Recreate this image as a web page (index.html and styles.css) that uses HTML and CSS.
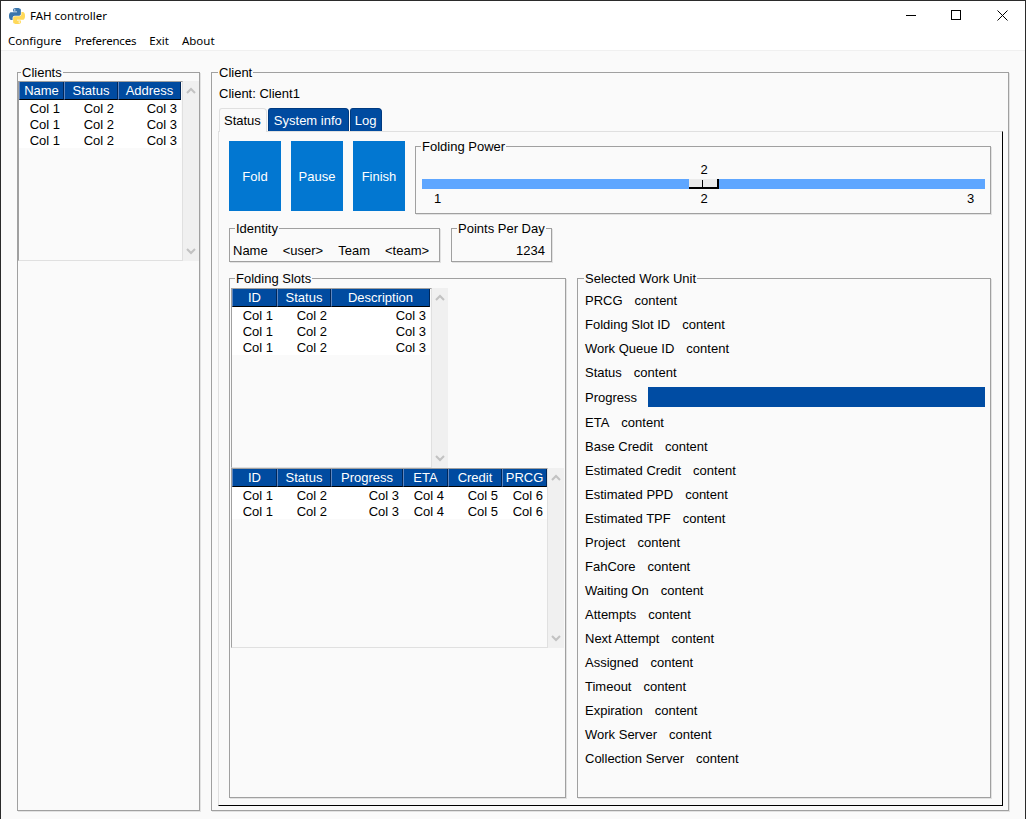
FILE: index.html
```html
<!DOCTYPE html>
<html lang="en">
<head>
<meta charset="utf-8">
<title>FAH controller</title>
<link rel="stylesheet" href="styles.css">
</head>
<body>
<div class="window">
  <header class="titlebar">
    <svg class="app-icon" viewBox="0 0 24 24" width="16" height="16">
      <path fill="#3a75ab" fill-rule="evenodd" d="M14.25.18l.9.2.73.26.59.3.45.32.34.34.25.34.16.33.1.3.04.26.02.2-.01.13V8.5l-.05.63-.13.55-.21.46-.26.38-.3.31-.33.25-.35.19-.35.14-.33.1-.3.07-.26.04-.21.02H8.77l-.69.05-.59.14-.5.22-.41.27-.33.32-.27.35-.2.36-.15.37-.1.35-.07.32-.04.27-.02.21v3.06H3.17l-.21-.03-.28-.07-.32-.12-.35-.18-.36-.26-.36-.36-.35-.46-.32-.59-.28-.73-.21-.88-.14-1.05-.05-1.23.06-1.22.16-1.04.24-.87.32-.71.36-.57.4-.44.42-.33.42-.24.4-.16.36-.1.32-.05.24-.01h.16l.06.01h8.16v-.83H6.18l-.01-2.75-.02-.37.05-.34.11-.31.17-.28.25-.26.31-.23.38-.2.44-.18.51-.15.58-.12.64-.1.71-.06.77-.04.84-.02 1.27.05zm-6.3 1.98l-.23.33-.08.41.08.41.23.34.33.22.41.09.41-.09.33-.22.23-.34.08-.41-.08-.41-.23-.33-.33-.22-.41-.09-.41.09z"/>
      <path fill="#ffd95a" fill-rule="evenodd" d="M21.04 6.11l.28.06.32.12.35.18.36.27.36.35.35.47.32.59.28.73.21.88.14 1.04.05 1.23-.06 1.23-.16 1.04-.24.86-.32.71-.36.57-.4.45-.42.33-.42.24-.4.16-.36.09-.32.05-.24.02-.16-.01h-8.22v.82h5.84l.01 2.76.02.36-.05.34-.11.31-.17.29-.25.25-.31.24-.38.2-.44.17-.51.15-.58.13-.64.09-.71.07-.77.04-.84.01-1.27-.04-1.07-.14-.9-.2-.73-.25-.59-.3-.45-.33-.34-.34-.25-.34-.16-.33-.1-.3-.04-.25-.02-.2.01-.13v-5.34l.05-.64.13-.54.21-.46.26-.38.3-.32.33-.24.35-.2.35-.14.33-.1.3-.06.26-.04.21-.02.13-.01h5.84l.69-.05.59-.14.5-.21.41-.28.33-.32.27-.35.2-.36.15-.36.1-.35.07-.32.04-.28.02-.21V6.07h2.09l.14.01zm-6.47 14.25l-.23.33-.08.41.08.41.23.33.33.23.41.08.41-.08.33-.23.23-.33.08-.41-.08-.41-.23-.33-.33-.23-.41-.08-.41.08z"/>
    </svg>
    <span class="title-text">FAH controller</span>
    <div class="controls">
      <span class="control"><svg width="10" height="10" viewBox="0 0 10 10"><path d="M0 5.5h10" stroke="#000" fill="none"/></svg></span>
      <span class="control"><svg width="10" height="10" viewBox="0 0 10 10"><rect x=".5" y=".5" width="9" height="9" stroke="#000" fill="none"/></svg></span>
      <span class="control control-close"><svg width="11" height="11" viewBox="0 0 11 11"><path d="M.5.5l10 10M10.5.5l-10 10" stroke="#000" fill="none"/></svg></span>
    </div>
  </header>
  <nav class="menu">
    <span>Configure</span><span>Preferences</span><span>Exit</span><span>About</span>
  </nav>
  <main class="main">
    <fieldset class="group clients">
      <legend>Clients</legend>
      <div class="list-wrap">
        <div class="list list-clients">
          <table class="grid">
            <colgroup><col class="w45"><col class="w54"><col class="w63"></colgroup>
            <thead><tr><th>Name</th><th>Status</th><th>Address</th></tr></thead>
            <tbody>
              <tr><td>Col 1</td><td>Col 2</td><td>Col 3</td></tr>
              <tr><td>Col 1</td><td>Col 2</td><td>Col 3</td></tr>
              <tr><td>Col 1</td><td>Col 2</td><td>Col 3</td></tr>
            </tbody>
          </table>
        </div>
        <div class="scrollbar">
          <svg width="10" height="7" viewBox="0 0 10 7"><path d="M1 6l4-4 4 4" class="chev"/></svg>
          <svg width="10" height="7" viewBox="0 0 10 7"><path d="M1 1l4 4 4-4" class="chev"/></svg>
        </div>
      </div>
    </fieldset>
    <fieldset class="group client">
      <legend>Client</legend>
      <div class="client-name">Client: Client1</div>
      <div class="tabs">
        <span class="tab tab-active">Status</span>
        <span class="tab tab-wide">System info</span>
        <span class="tab">Log</span>
      </div>
      <section class="pane">
        <div class="top-row">
          <button class="action">Fold</button>
          <button class="action">Pause</button>
          <button class="action">Finish</button>
          <fieldset class="group power">
            <legend>Folding Power</legend>
            <div class="slider-value">2</div>
            <div class="track"><div class="thumb"><i class="tick"></i></div></div>
            <div class="scale"><span>1</span><span>2</span><span>3</span></div>
          </fieldset>
        </div>
        <div class="info-row">
          <fieldset class="group identity">
            <legend>Identity</legend>
            <div class="identity-row"><span>Name</span><span>&lt;user&gt;</span><span>Team</span><span>&lt;team&gt;</span></div>
          </fieldset>
          <fieldset class="group ppd">
            <legend>Points Per Day</legend>
            <div class="ppd-value">1234</div>
          </fieldset>
        </div>
        <div class="bottom-row">
          <fieldset class="group slots">
            <legend>Folding Slots</legend>
            <div class="list-wrap">
              <div class="list list-slots">
                <table class="grid">
                  <colgroup><col class="w45"><col class="w54"><col class="w99"></colgroup>
                  <thead><tr><th>ID</th><th>Status</th><th>Description</th></tr></thead>
                  <tbody>
                    <tr><td>Col 1</td><td>Col 2</td><td>Col 3</td></tr>
                    <tr><td>Col 1</td><td>Col 2</td><td>Col 3</td></tr>
                    <tr><td>Col 1</td><td>Col 2</td><td>Col 3</td></tr>
                  </tbody>
                </table>
              </div>
              <div class="scrollbar">
                <svg width="10" height="7" viewBox="0 0 10 7"><path d="M1 6l4-4 4 4" class="chev"/></svg>
                <svg width="10" height="7" viewBox="0 0 10 7"><path d="M1 1l4 4 4-4" class="chev"/></svg>
              </div>
            </div>
            <div class="list-wrap">
              <div class="list list-units">
                <table class="grid">
                  <colgroup><col class="w45"><col class="w54"><col class="w72"><col class="w45"><col class="w54"><col class="w45"></colgroup>
                  <thead><tr><th>ID</th><th>Status</th><th>Progress</th><th>ETA</th><th>Credit</th><th>PRCG</th></tr></thead>
                  <tbody>
                    <tr><td>Col 1</td><td>Col 2</td><td>Col 3</td><td>Col 4</td><td>Col 5</td><td>Col 6</td></tr>
                    <tr><td>Col 1</td><td>Col 2</td><td>Col 3</td><td>Col 4</td><td>Col 5</td><td>Col 6</td></tr>
                  </tbody>
                </table>
              </div>
              <div class="scrollbar">
                <svg width="10" height="7" viewBox="0 0 10 7"><path d="M1 6l4-4 4 4" class="chev"/></svg>
                <svg width="10" height="7" viewBox="0 0 10 7"><path d="M1 1l4 4 4-4" class="chev"/></svg>
              </div>
            </div>
          </fieldset>
          <fieldset class="group selected">
            <legend>Selected Work Unit</legend>
            <div class="field"><span>PRCG</span><span>content</span></div>
            <div class="field"><span>Folding Slot ID</span><span>content</span></div>
            <div class="field"><span>Work Queue ID</span><span>content</span></div>
            <div class="field"><span>Status</span><span>content</span></div>
            <div class="field field-progress"><span>Progress</span><div class="progress"></div></div>
            <div class="field"><span>ETA</span><span>content</span></div>
            <div class="field"><span>Base Credit</span><span>content</span></div>
            <div class="field"><span>Estimated Credit</span><span>content</span></div>
            <div class="field"><span>Estimated PPD</span><span>content</span></div>
            <div class="field"><span>Estimated TPF</span><span>content</span></div>
            <div class="field"><span>Project</span><span>content</span></div>
            <div class="field"><span>FahCore</span><span>content</span></div>
            <div class="field"><span>Waiting On</span><span>content</span></div>
            <div class="field"><span>Attempts</span><span>content</span></div>
            <div class="field"><span>Next Attempt</span><span>content</span></div>
            <div class="field"><span>Assigned</span><span>content</span></div>
            <div class="field"><span>Timeout</span><span>content</span></div>
            <div class="field"><span>Expiration</span><span>content</span></div>
            <div class="field"><span>Work Server</span><span>content</span></div>
            <div class="field"><span>Collection Server</span><span>content</span></div>
          </fieldset>
        </div>
      </section>
    </fieldset>
  </main>
</div>
</body>
</html>
```
FILE: styles.css
```css
* { box-sizing: border-box; }
html, body { margin: 0; padding: 0; }
body {
  font-family: "Liberation Sans", Arial, sans-serif;
  font-size: 13px;
  line-height: 14px;
  color: #000;
  background: #fafafa;
}
.window {
  width: 1026px;
  height: 819px;
  display: flex;
  flex-direction: column;
  border: 1px solid #2b2b2b;
  border-bottom: 0;
  overflow: hidden;
}
.titlebar {
  height: 29px;
  flex: none;
  display: flex;
  align-items: center;
  background: #fff;
  padding-left: 8px;
  font-family: "Noto Sans", sans-serif;
  font-size: 11.5px;
}
.app-icon { flex: none; margin-right: 5px; }
.title-text { flex: 1; }
.controls { display: flex; gap: 35px; margin-right: 17px; align-self: flex-start; }
.control {
  height: 28px;
  display: flex;
  align-items: center;
}
.control-close { height: 29px; margin-left: 1px; }
.menu {
  height: 21px;
  flex: none;
  display: flex;
  gap: 13px;
  padding: 3px 0 0 7px;
  background: #fff;
  border-bottom: 1px solid #f0f0f0;
  font-family: "Noto Sans", sans-serif;
  font-size: 11.5px;
  line-height: 16px;
}
.menu span:nth-child(2) { letter-spacing: -.2px; }
.main {
  flex: 1;
  min-height: 0;
  display: flex;
  gap: 11px;
  padding: 14px 16px 8px 16px;
  background: #fafafa;
}
.group {
  margin: 0;
  padding: 0;
  min-width: 0;
  border: 1px solid #a0a0a0;
  box-shadow: 1px 1px 0 #e2e2e2;
}
.group legend {
  padding: 0 1px;
  line-height: 16px;
  height: 14px;
  white-space: nowrap;
}
.clients { width: 183px; flex: none; padding-top: 2px; }
.clients legend { margin-left: 3px; }
.client { flex: 1; padding: 7px 5px 4px 6px; display: flex; flex-direction: column; }
.client legend { margin-left: 0; }
.client-name { margin-left: 1px; height: 14px; line-height: 16px; }
.tabs { display: flex; gap: 1px; margin: 8px 0 0 1px; height: 23px; }
.tab {
  padding: 5px 5px 0 4px;
  background: #004ba0;
  color: #fff;
  border: 1px solid #003a80;
  border-bottom: 0;
  border-radius: 3px 4px 0 0;
}
.tab-wide { padding-left: 5px; padding-right: 6px; }
.tab-active {
  background: #fafafa;
  color: #000;
  border-color: #e0e0e0;
  height: 24px;
  position: relative;
  z-index: 1;
}
.pane {
  flex: 1;
  min-height: 0;
  display: flex;
  flex-direction: column;
  padding: 7px 11px 7px 10px;
  border: 1px solid #e0e0e0;
  border-right-color: #000;
  border-bottom-color: #000;
}
.top-row { display: flex; gap: 10px; align-items: flex-start; height: 75px; }
.action {
  width: 52px;
  height: 70px;
  margin-top: 2px;
  padding: 2px 0 0;
  border: 0;
  background: #0277d1;
  color: #fff;
  font: inherit;
}
.power { flex: 1; height: 75px; padding: 9px 5px 0 6px; }
.power legend { margin-left: -1px; }
.slider-value { text-align: center; height: 14px; line-height: 16px; padding-left: 1px; }
.track {
  height: 10px;
  margin-top: 3px;
  background: #5ea6ff;
  display: flex;
  justify-content: center;
}
.thumb {
  width: 30px;
  height: 10px;
  background: #ebebeb;
  border-right: 2px solid #000;
  border-bottom: 2px solid #000;
  display: flex;
  justify-content: center;
}
.tick { width: 1px; height: 7px; margin-top: 1px; background: #000; }
.scale { display: flex; justify-content: space-between; margin-top: 3px; }
.scale span { width: 30px; text-align: center; padding-left: 1px; }
.info-row { display: flex; gap: 11px; margin-top: 7px; }
.identity { width: 211px; padding: 9px 3px 3px; }
.identity legend { margin-left: 2px; }
.identity-row { display: flex; gap: 15px; }
.ppd { width: 101px; padding: 9px 6px 3px 0; }
.ppd legend { margin-left: 5px; }
.ppd-value { text-align: right; }
.bottom-row { display: flex; gap: 11px; margin-top: 9px; flex: 1; min-height: 0; }
.slots { width: 337px; padding: 3px 0 0 1px; }
.slots legend { margin-left: 4px; }
.selected { width: 414px; padding: 3px 5px 0 7px; }
.selected legend { margin-left: -1px; }
.list-wrap { display: flex; height: 180px; }
.list {
  height: 180px;
  background: #fafafa;
  border: 1px solid #a0a0a0;
  border-right-color: #e0e0e0;
  border-bottom-color: #e0e0e0;
}
.list-clients { width: 165px; }
.list-slots { width: 201px; }
.list-units { width: 317px; }
.scrollbar {
  width: 16px;
  flex: none;
  background: #f0f0f0;
  display: flex;
  flex-direction: column;
  align-items: center;
  justify-content: space-between;
  padding: 6px 0;
}
.chev { fill: none; stroke: #c2c2c2; stroke-width: 2; }
.grid { border-collapse: separate; border-spacing: 0; table-layout: fixed; background: #fff; }
.w45 { width: 45px; }
.w54 { width: 54px; }
.w63 { width: 63px; }
.w72 { width: 72px; }
.w99 { width: 99px; }
.grid th {
  height: 18px;
  padding: 1px 0 0;
  background: #004ba0;
  color: #fff;
  font-weight: normal;
  text-align: center;
  border-bottom: 1px solid #000;
  border-left: 1px solid #5f86bf;
  border-right: 1px solid #00275a;
}
.grid td {
  height: 16px;
  padding: 1px 4px 0 0;
  text-align: right;
}
.field {
  height: 24px;
  display: flex;
  align-items: center;
  gap: 12px;
}
.field span { padding-top: 2px; }
.field-progress { height: 26px; gap: 11px; }
.progress { flex: 1; height: 20px; background: #004ca3; }
```
